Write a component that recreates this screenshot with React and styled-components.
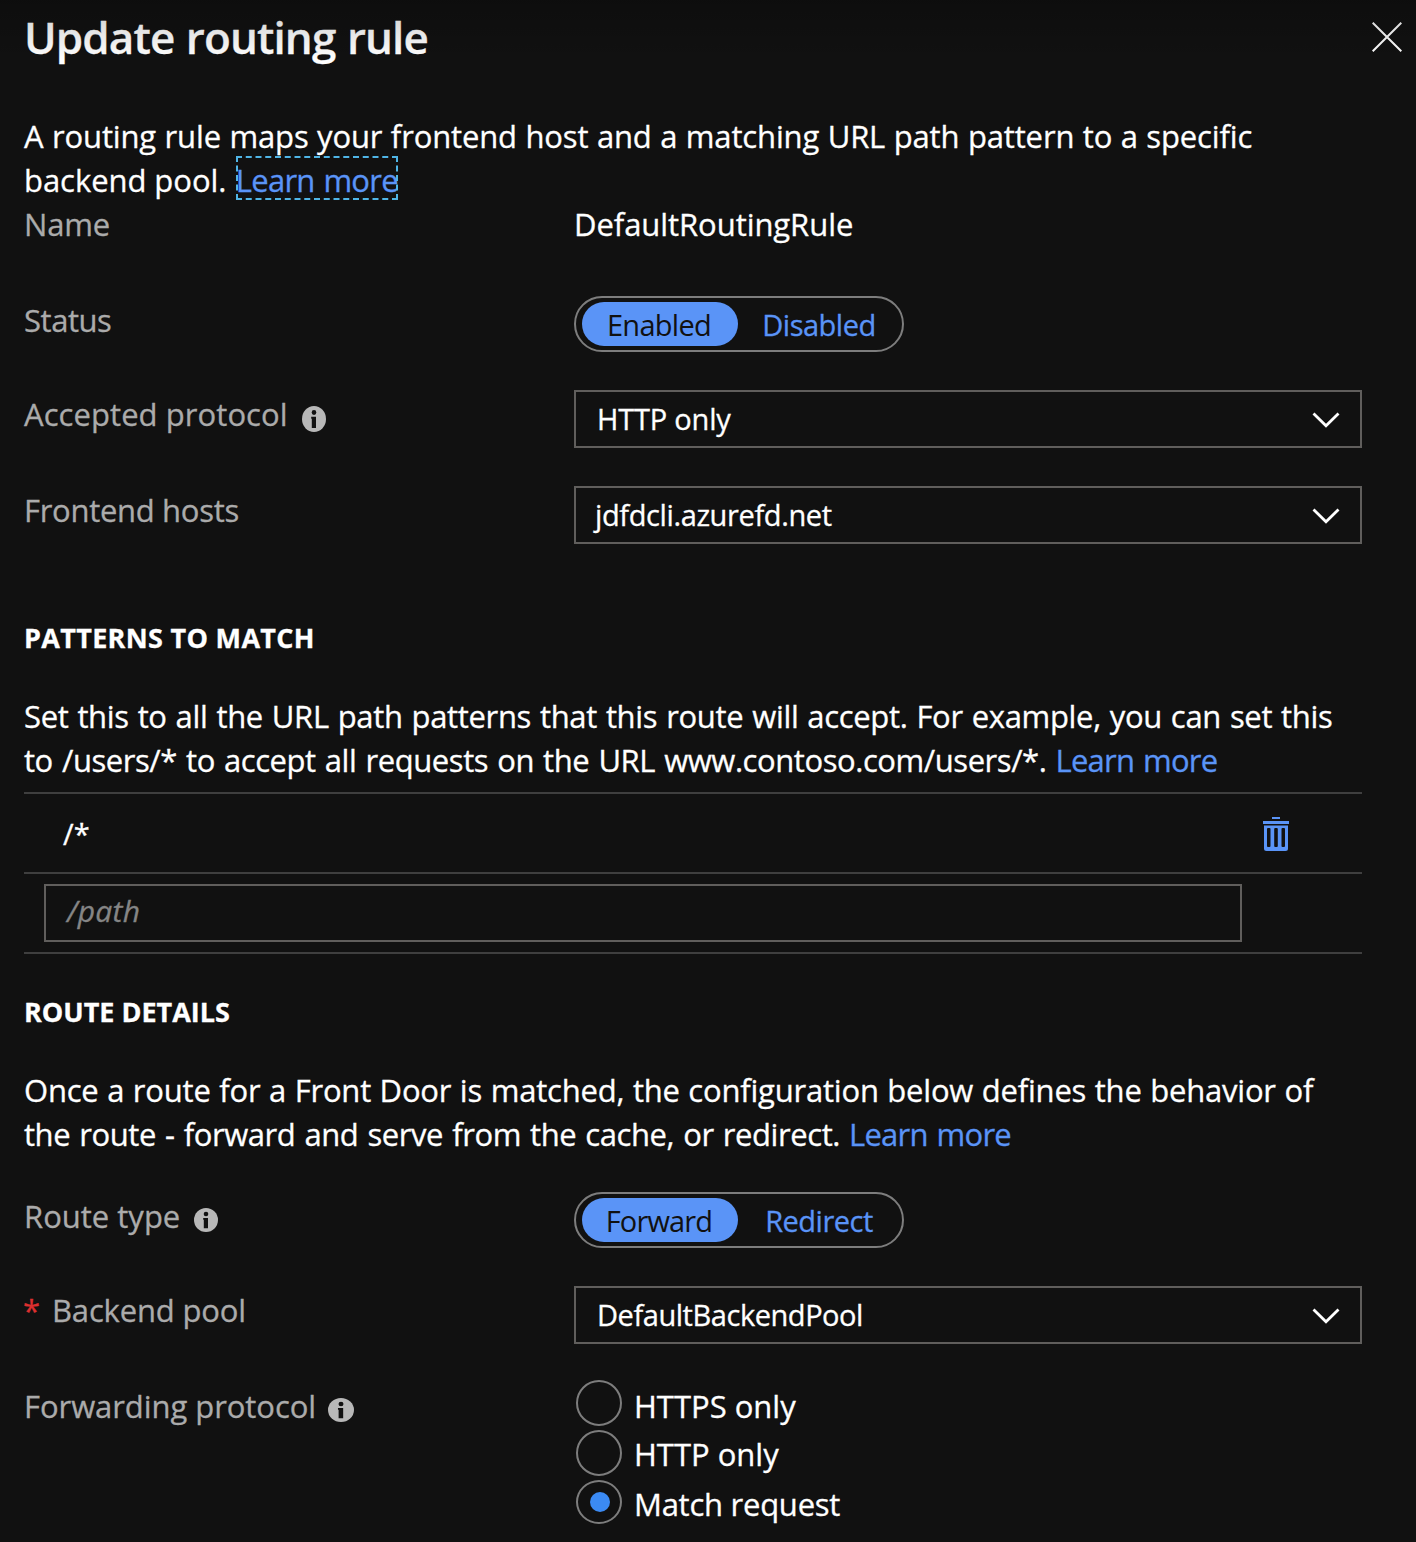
import React from "react";
import styled, { createGlobalStyle } from "styled-components";

const GlobalStyle = createGlobalStyle`
  * { box-sizing: border-box; }
  body { margin: 0; background: #111111; }
`;

const Blade = styled.main`
  position: relative;
  width: 1416px;
  height: 1542px;
  overflow: hidden;
  padding: 0 54px 0 24px;
  background: #111111;
  color: #ffffff;
  font-family: "Open Sans", "Noto Sans", sans-serif;
  font-size: 31px;
  line-height: 44px;
  -webkit-text-stroke: 0.3px currentColor;
`;

const TopShade = styled.div`
  position: absolute;
  inset: 0 0 auto 0;
  height: 60px;
  background: linear-gradient(rgba(0, 0, 0, 0.22), rgba(0, 0, 0, 0));
  pointer-events: none;
`;

const Header = styled.header`
  display: flex;
  justify-content: space-between;
  height: 114px;
  margin-right: -40px;
`;

const Title = styled.h1`
  margin: 7px 0 0;
  font-size: 44px;
  line-height: 60px;
  font-weight: 600;
`;

const CloseButton = styled.button`
  width: 30px;
  height: 30px;
  margin: 22px 0 0;
  padding: 0;
  border: 0;
  background: none;
  color: #ffffff;
  svg { display: block; }
`;

const Copy = styled.p`
  margin: 0;
  white-space: nowrap;
`;

const T = styled.span`
  letter-spacing: ${(p) => p.$ls || 0}px;
  word-spacing: ${(p) => p.$ws || 0}px;
  white-space: pre;
`;

const Link = styled.a`
  display: inline-block;
  height: 44px;
  line-height: 48px;
  vertical-align: top;
  margin-top: -2px;
  margin-left: ${(p) => p.$gap || 0}px;
  color: #5a94f7;
  letter-spacing: -0.75px;
  word-spacing: 1.5px;
  text-decoration: none;
  outline: ${(p) => (p.$focused ? "2px dashed #4fb5e6" : "none")};
  outline-offset: -2px;
`;

const Section = styled.section`
  margin-top: ${(p) => p.$top}px;
`;

const Heading = styled.h2`
  margin: 0 0 ${(p) => p.$bottom}px;
  font-size: 27px;
  line-height: 36px;
  font-weight: 700;
`;

const Row = styled.div`
  display: grid;
  grid-template-columns: 550px 788px;
  align-items: start;
  margin-bottom: ${(p) => p.$gap ?? 38}px;
`;

const Label = styled.label`
  display: flex;
  align-items: flex-start;
  height: 44px;
  margin-top: ${(p) => p.$top ?? 2}px;
  color: #ababab;
`;

const InfoMark = styled.svg`
  margin: ${(p) => p.$top}px 0 0 ${(p) => p.$left}px;
`;

const Required = styled.span`
  width: 29px;
  margin-left: -1px;
  color: #dc2f2f;
`;

const Toggle = styled.div`
  display: flex;
  width: 330px;
  height: 56px;
  padding: 4px 6px;
  border: 2px solid #7d7d7d;
  border-radius: 28px;
  font-size: 29px;
`;

const Option = styled.span`
  flex: 0 0 ${(p) => (p.$on ? 156 : 162)}px;
  height: 44px;
  line-height: 45px;
  padding-right: ${(p) => (p.$on ? 2 : 0)}px;
  border-radius: 22px;
  text-align: center;
  background: ${(p) => (p.$on ? "#5a94f7" : "transparent")};
  color: ${(p) => (p.$on ? "#111111" : "#5a94f7")};
  -webkit-text-stroke-width: ${(p) => (p.$on ? 0 : 0.3)}px;
`;

const Select = styled.div`
  display: flex;
  justify-content: space-between;
  align-items: center;
  height: 58px;
  padding: 0 20px 0 ${(p) => p.$left ?? 21}px;
  border: 2px solid #605e5c;
  font-size: 29px;
  svg { margin-top: 2px; }
`;

const PatternTable = styled.div`
  margin-top: 10px;
  border-top: 2px solid #3f3f3f;
`;

const PatternRow = styled.div`
  display: flex;
  justify-content: space-between;
  height: 80px;
  padding: ${(p) => (p.$input ? "10px 72px 0 20px" : "18px 72px 0 39px")};
  border-bottom: 2px solid #3f3f3f;
  font-size: 29px;
  svg { margin-top: 4px; }
`;

const PathInput = styled.div`
  width: 1198px;
  height: 58px;
  padding: 3px 21px;
  border: 2px solid #605e5c;
  color: #858585;
  font-size: 30px;
  font-style: italic;
`;

const Radios = styled.div`
  display: flex;
  flex-direction: column;
  gap: 4px;
  padding-left: 2px;
`;

const Radio = styled.div`
  display: flex;
  align-items: flex-start;
  height: 46px;
`;

const Circle = styled.span`
  display: flex;
  align-items: center;
  justify-content: center;
  width: 46px;
  height: ${(p) => (p.$on ? 44 : 46)}px;
  margin-right: 12px;
  border: 2px solid #7d7d7d;
  border-radius: 50%;
`;

const Dot = styled.span`
  width: 20px;
  height: 20px;
  margin-left: 2px;
  border-radius: 50%;
  background: #3b8af3;
`;

const RadioText = styled.span`
  margin-top: ${(p) => p.$top}px;
`;

const Info = ({ left = 14, top = 14, w = 24, h = 24 }) => (
  <InfoMark $left={left} $top={top} width={w} height={h} viewBox="0 0 24 24" preserveAspectRatio="none">
    <circle cx="12" cy="12" r="12" fill="#b8b8b8" />
    <circle cx="12" cy="6" r="2.3" fill="#111" />
    <path d="M9.200 10h4.800v10.200H9.800v-8.400h-.6z" fill="#111" />
  </InfoMark>
);

const Chevron = () => (
  <svg width="28" height="16" viewBox="0 0 28 16" fill="none" stroke="#fff" strokeWidth="2.8">
    <path d="M1.500 1.500 14 13.800 26.500 1.500" />
  </svg>
);

const Trash = () => (
  <svg width="28" height="36" viewBox="0 0 28 36" fill="#5a94f7">
    <rect x="10" y="1" width="8" height="2" />
    <rect x="1" y="5" width="26" height="3" />
    <path fillRule="evenodd" d="M2 9.500h24v23q0 2.500-2.500 2.500h-19Q2 35 2 32.500zM6 12q-1 0-1 1v17q0 1 1 1h1.500q1 0 1-1V13q0-1-1-1zM13.200 12q-1 0-1 1v17q0 1 1 1h1.600q1 0 1-1V13q0-1-1-1zM20.500 12q-1 0-1 1v17q0 1 1 1H22q1 0 1-1V13q0-1-1-1z" />
  </svg>
);

export default function App() {
  return (
    <Blade>
      <GlobalStyle />
      <Header>
        <Title><T $ls={-0.9} $ws={1}>Update routing rule</T></Title>
        <CloseButton aria-label="Close">
          <svg width="30" height="30" viewBox="0 0 30 30" stroke="currentColor" strokeWidth="2"><path d="M.7.7 29.300 29.300M29.300.7.7 29.300" /></svg>
        </CloseButton>
      </Header>
      <Copy>
        <T $ls={-0.14} $ws={0.6}>A routing rule maps your frontend host and a matching URL path pattern to a specific</T><br />
        <T $ls={-0.05}>backend pool.</T><Link $gap={9.5} $focused>Learn more</Link>
      </Copy>
      <Row $gap={50}>
        <Label $top={0}><T $ls={-0.2}>Name</T></Label><T $ls={-0.06}>DefaultRoutingRule</T>
      </Row>
      <Row>
        <Label><T $ls={-0.45}>Status</T></Label>
        <Toggle><Option $on><T $ls={-0.7}>Enabled</T></Option><Option><T $ls={-0.5}>Disabled</T></Option></Toggle>
      </Row>
      <Row>
        <Label><T $ls={0.07}>Accepted protocol</T><Info left={14} h={26} /></Label>
        <Select><T $ls={-0.2}>HTTP only</T><Chevron /></Select>
      </Row>
      <Row $gap={0}>
        <Label><T $ls={-0.3}>Frontend hosts</T></Label>
        <Select $left={19}><T $ls={-0.38}>jdfdcli.azurefd.net</T><Chevron /></Select>
      </Row>
      <Section $top={76}>
        <Heading $bottom={38}><T $ls={0.32}>PATTERNS TO MATCH</T></Heading>
        <Copy>
          <T $ls={-0.33} $ws={1.2}>Set this to all the URL path patterns that this route will accept. For example, you can set this</T><br />
          <T $ls={-0.435} $ws={1.5}>to /users/* to accept all requests on the URL www.contoso.com/users/*.</T><Link $gap={9}>Learn more</Link>
        </Copy>
        <PatternTable>
          <PatternRow><T>/*</T><Trash /></PatternRow>
          <PatternRow $input><PathInput><T $ls={0.25}>/path</T></PathInput></PatternRow>
        </PatternTable>
      </Section>
      <Section $top={40}>
        <Heading $bottom={38}><T>ROUTE DETAILS</T></Heading>
        <Copy>
          <T $ls={-0.21} $ws={0.8}>Once a route for a Front Door is matched, the configuration below defines the behavior of</T><br />
          <T $ls={-0.43} $ws={1.5}>the route - forward and serve from the cache, or redirect.</T><Link $gap={9}>Learn more</Link>
        </Copy>
      </Section>
      <Section $top={36}>
        <Row>
          <Label><T>Route type</T><Info /></Label>
          <Toggle><Option $on><T $ls={-0.85}>Forward</T></Option><Option><T $ls={-0.5}>Redirect</T></Option></Toggle>
        </Row>
        <Row $gap={36}>
          <Label><Required>*</Required><T $ls={-0.17}>Backend pool</T></Label>
          <Select><T $ls={-0.45}>DefaultBackendPool</T><Chevron /></Select>
        </Row>
        <Row>
          <Label $top={4}><T $ls={-0.06}>Forwarding protocol</T><Info left={12} w={26} /></Label>
          <Radios>
            <Radio><Circle /><RadioText $top={4}><T>HTTPS only</T></RadioText></Radio>
            <Radio><Circle /><RadioText $top={2}><T>HTTP only</T></RadioText></Radio>
            <Radio><Circle $on><Dot /></Circle><RadioText $top={2}><T $ls={-0.25}>Match request</T></RadioText></Radio>
          </Radios>
        </Row>
      </Section>
      <TopShade />
    </Blade>
  );
}
